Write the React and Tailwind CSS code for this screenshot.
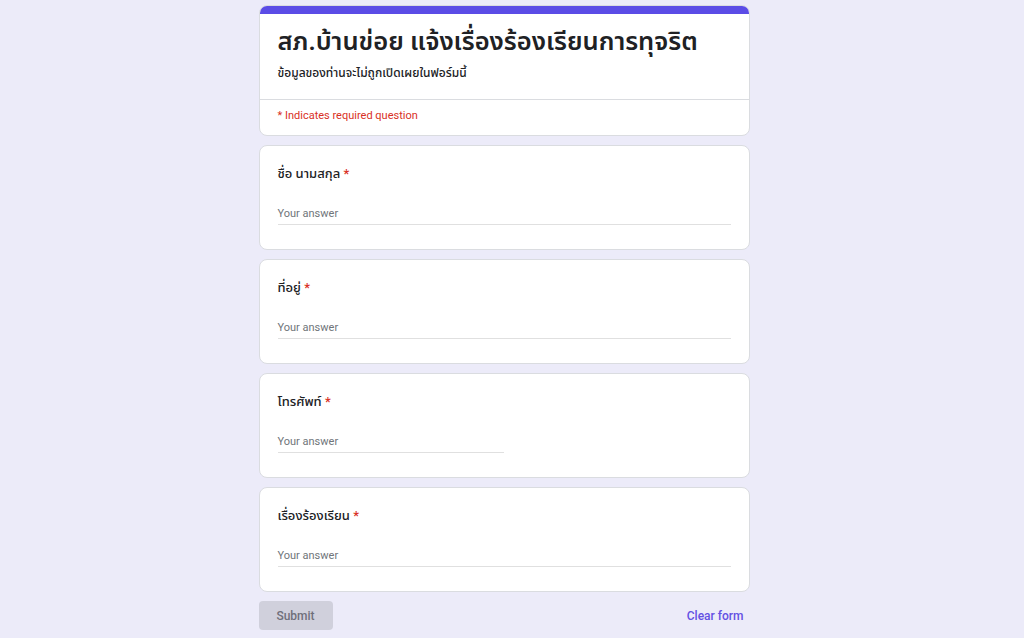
import React from "react";

const font = { fontFamily: 'Roboto, "Noto Sans Thai", "Noto Sans", "Liberation Sans", sans-serif' };

function Question({ label, half }) {
  return (
    <div className="bg-white rounded-lg border border-[#dadce0] px-[18px] pt-[18px] pb-[24px]">
      <div className="text-[13px] leading-[20px] font-medium text-[#202124]">
        {label} <span className="text-[#d93025]">*</span>
      </div>
      <div className={`mt-[20px] border-b border-[#e0e0e0] ${half ? "w-[226px]" : "w-full"}`}>
        <div className="text-[11px] leading-[20px] text-[#70757a]">Your answer</div>
      </div>
    </div>
  );
}

export default function App() {
  return (
    <div className="min-h-[638px] bg-[#ecebf9] flex justify-center pr-[16px]" style={font}>
      <div className="w-[491px] pt-[5px] flex flex-col gap-[9px]">
        <div className="bg-white rounded-lg border border-[#dadce0] overflow-hidden">
          <div className="h-[8px] bg-[#5b4ce6]" />
          <div className="px-[18px] pt-[11px] pb-[18px] border-b border-[#dadce0]">
            <h1 className="text-[25.5px] leading-[32px] font-semibold text-[#202124]">
              สภ.บ้านข่อย แจ้งเรื่องร้องเรียนการทุจริต
            </h1>
            <p className="mt-[8px] text-[12px] leading-[16px] font-medium text-[#202124]">
              ข้อมูลของท่านจะไม่ถูกเปิดเผยในฟอร์มนี้
            </p>
          </div>
          <div className="px-[18px] pt-[8px] pb-[11px] text-[11px] leading-[16px] text-[#d93025]">
            * Indicates required question
          </div>
        </div>
        <Question label="ชื่อ นามสกุล" />
        <Question label="ที่อยู่ " />
        <Question label="โทรศัพท์" half />
        <Question label="เรื่องร้องเรียน" />
        <div className="flex items-center justify-between">
          <button className="w-[74px] h-[29px] rounded bg-[#d0d0dc] text-[12px] font-medium text-[#6f6f7a]">
            Submit
          </button>
          <button className="text-[12px] font-medium text-[#6451e3] pr-[6px]">Clear form</button>
        </div>
      </div>
    </div>
  );
}
